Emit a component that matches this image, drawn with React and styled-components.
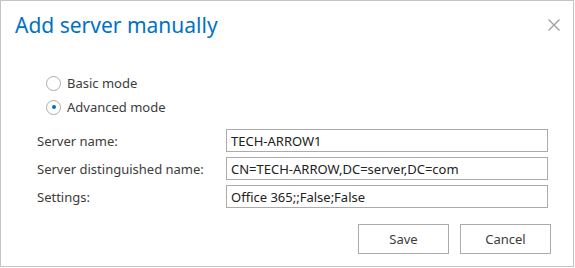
import React, { useState } from 'react';
import styled, { createGlobalStyle } from 'styled-components';

const GlobalStyle = createGlobalStyle`
    html, body {
        margin: 0;
        background: #ffffff;
    }
    body {
        font-family: "Noto Sans", "Open Sans", sans-serif;
        color: #3c3c3c;
    }
`;

export default function App() {
    const [mode, setMode] = useState('advanced');
    const [form, setForm] = useState(initialState);

    const handleChange = (e) => {
        const { name, value } = e.target;
        setForm({ ...form, [name]: value });
    };

    return (
        <>
            <GlobalStyle />
            <Dialog>
                <Header>
                    <Title>Add server manually</Title>
                    <CloseButton aria-label="Close">
                        <svg width="12" height="12" viewBox="0 0 12 12">
                            <path d="M0.5 0.5 L11.5 11.5 M11.5 0.5 L0.5 11.5" stroke="#a0a0a0" strokeWidth="1.4" fill="none" />
                        </svg>
                    </CloseButton>
                </Header>
                <RadioGroup>
                    {modes.map((m) => (
                        <RadioRow key={m.id} onClick={() => setMode(m.id)}>
                            <RadioDot $checked={mode === m.id} />
                            <span>{m.label}</span>
                        </RadioRow>
                    ))}
                </RadioGroup>
                <Fields>
                    {fields.map((f) => (
                        <React.Fragment key={f.name}>
                            <Label htmlFor={f.name}>{f.label}</Label>
                            <Input id={f.name} name={f.name} value={form[f.name]} onChange={handleChange} />
                        </React.Fragment>
                    ))}
                </Fields>
                <Footer>
                    <Button>Save</Button>
                    <Button>Cancel</Button>
                </Footer>
            </Dialog>
        </>
    );
}

const modes = [
    { id: 'basic', label: 'Basic mode' },
    { id: 'advanced', label: 'Advanced mode' },
];

const fields = [
    { name: 'serverName', label: 'Server name:' },
    { name: 'distinguishedName', label: 'Server distinguished name:' },
    { name: 'settings', label: 'Settings:' },
];

const initialState = {
    serverName: 'TECH-ARROW1',
    distinguishedName: 'CN=TECH-ARROW,DC=server,DC=com',
    settings: 'Office 365;;False;False',
};

const Dialog = styled.div`
    box-sizing: border-box;
    width: 574px;
    height: 267px;
    border: 1px solid #c4c4c4;
    background: #fff;
    display: flex;
    flex-direction: column;
`;

const Header = styled.div`
    display: flex;
    justify-content: space-between;
    align-items: flex-start;
    padding: 9px 12px 0 14px;
`;

const Title = styled.h1`
    margin: 0;
    font-size: 21px;
    font-weight: normal;
    color: #0072c6;
    line-height: 30px;
`;

const CloseButton = styled.button`
    border: none;
    background: none;
    padding: 0;
    margin-top: 8px;
    width: 14px;
    height: 14px;
    display: flex;
    align-items: center;
    justify-content: center;
    cursor: pointer;
`;

const RadioGroup = styled.div`
    display: flex;
    flex-direction: column;
    gap: 6px;
    padding: 34px 0 0 45px;
`;

const RadioRow = styled.label`
    display: flex;
    align-items: center;
    gap: 6px;
    font-size: 13px;
    height: 18px;
    cursor: pointer;
`;

const RadioDot = styled.span`
    box-sizing: border-box;
    width: 15px;
    height: 15px;
    border-radius: 50%;
    border: 1px solid #ababab;
    display: flex;
    align-items: center;
    justify-content: center;

    &::after {
        content: '';
        width: 4px;
        height: 4px;
        border-radius: 50%;
        background: ${(p) => (p.$checked ? '#0072c6' : 'transparent')};
    }
`;

const Fields = styled.div`
    display: grid;
    grid-template-columns: 189px 322px;
    row-gap: 5px;
    align-items: center;
    padding: 13px 0 0 36px;
`;

const Label = styled.label`
    font-size: 13px;
`;

const Input = styled.input`
    box-sizing: border-box;
    height: 23px;
    border: 1px solid #ababab;
    padding: 0 4px;
    font-family: inherit;
    font-size: 13px;
    color: #222;
    outline: none;
`;

const Footer = styled.div`
    display: flex;
    justify-content: flex-end;
    gap: 11px;
    padding: 16px 22px 0 0;
`;

const Button = styled.button`
    box-sizing: border-box;
    width: 91px;
    height: 30px;
    border: 1px solid #ababab;
    background: #fff;
    font-family: inherit;
    font-size: 13px;
    color: #3c3c3c;
    cursor: pointer;
`;
